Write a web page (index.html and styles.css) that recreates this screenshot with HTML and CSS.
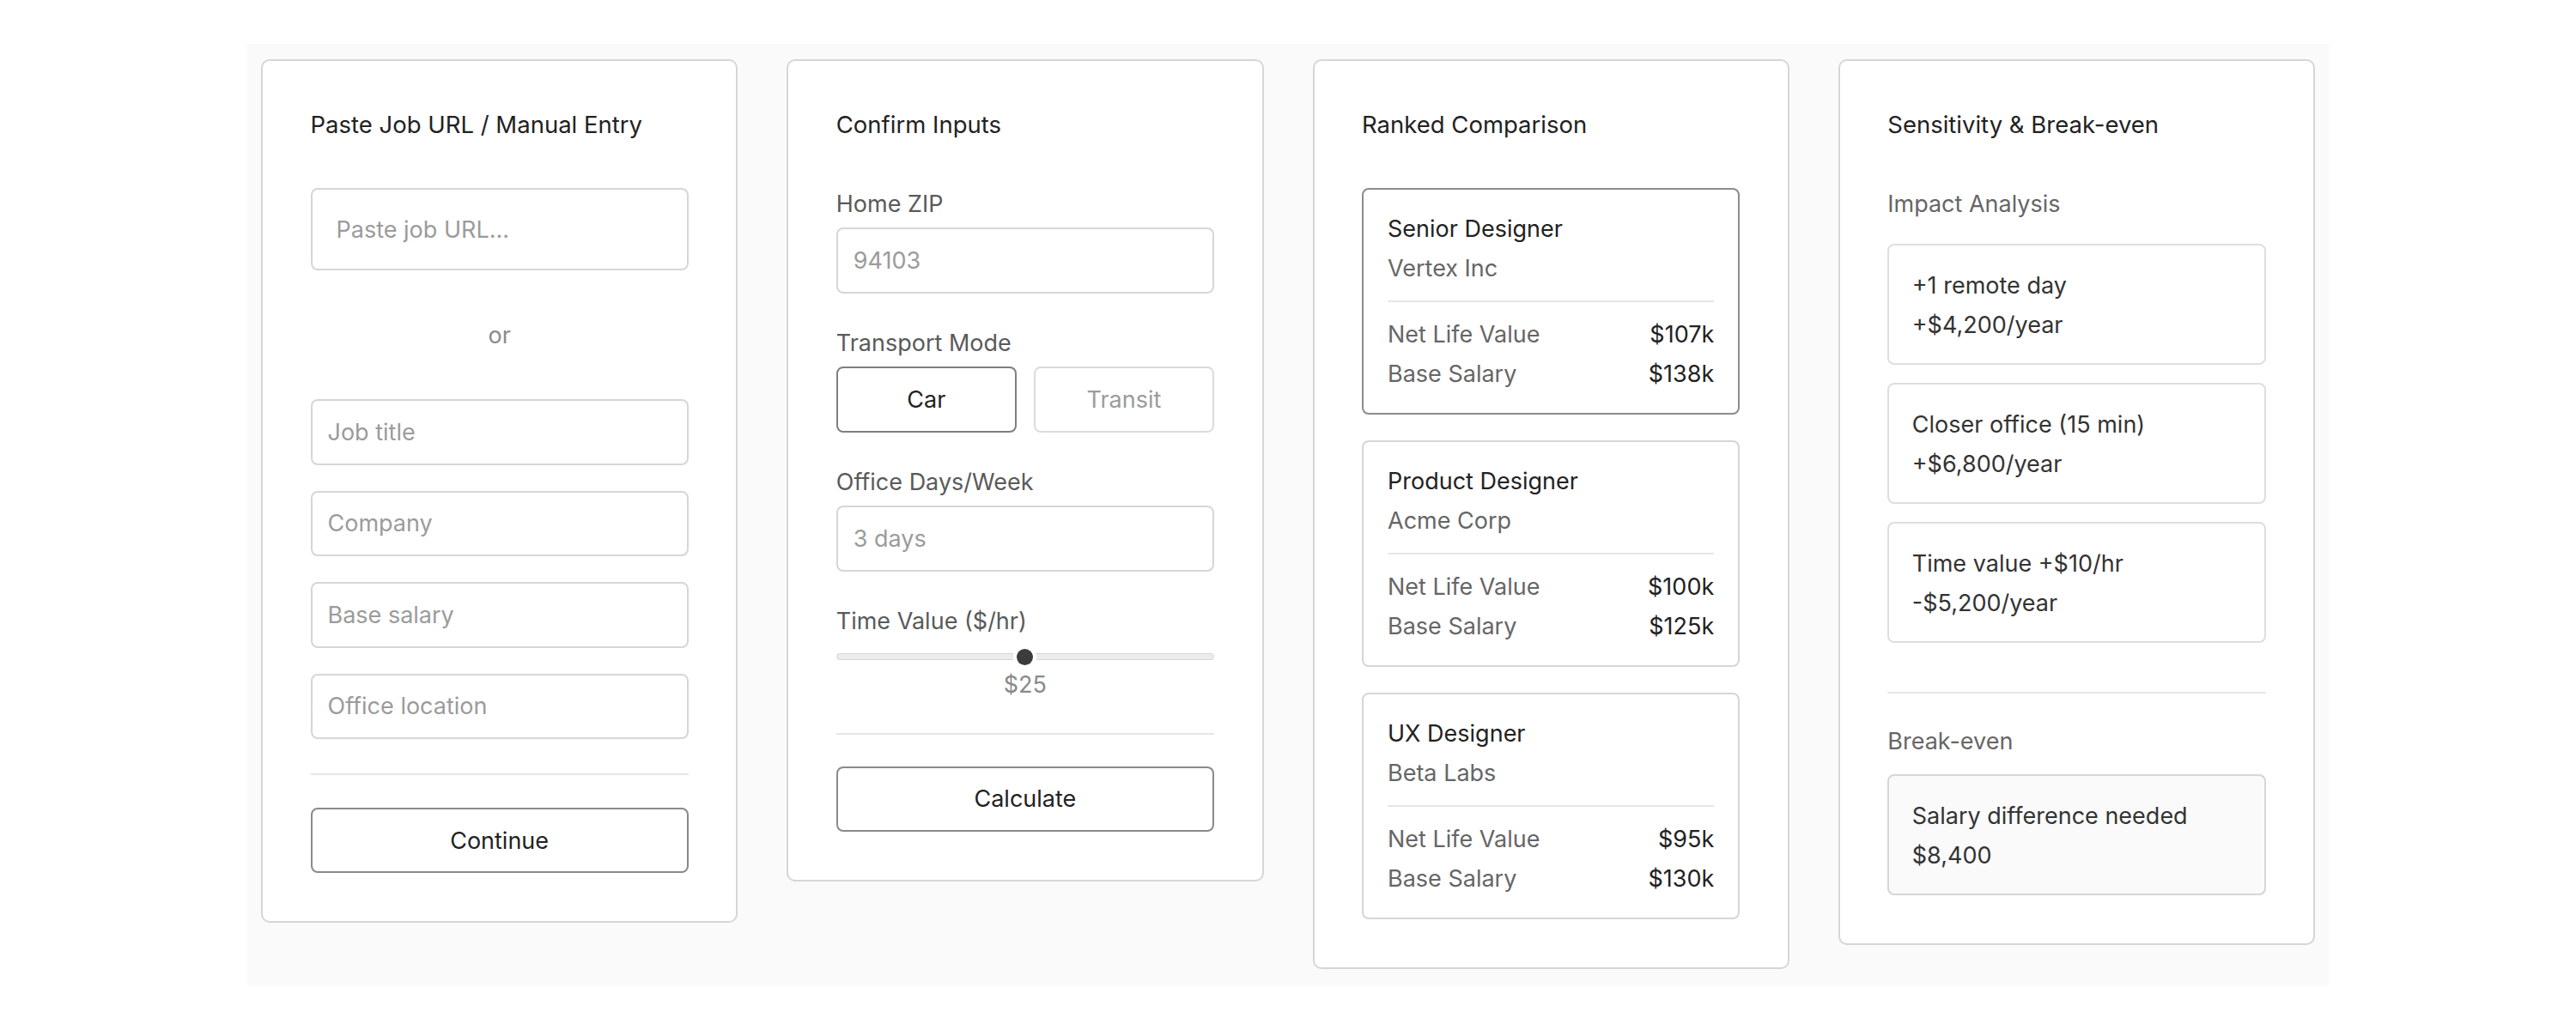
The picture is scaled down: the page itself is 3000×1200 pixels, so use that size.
FILE: index.html
```html
<!DOCTYPE html>
<html lang="en">
<head>
<meta charset="utf-8">
<title>Job Offer Comparison</title>
<link rel="stylesheet" href="styles.css">
</head>
<body>
<main class="board">
  <section class="card">
    <h2 class="card-title">Paste Job URL / Manual Entry</h2>
    <input class="field field-url" type="text" placeholder="Paste job URL...">
    <div class="or">or</div>
    <div class="stack">
      <input class="field field-entry" type="text" placeholder="Job title">
      <input class="field field-entry" type="text" placeholder="Company">
      <input class="field field-entry" type="text" placeholder="Base salary">
      <input class="field field-entry" type="text" placeholder="Office location">
    </div>
    <hr class="divider">
    <button class="btn" type="button">Continue</button>
  </section>

  <section class="card">
    <h2 class="card-title">Confirm Inputs</h2>
    <div class="group">
      <div class="label">Home ZIP</div>
      <input class="field field-tall" type="text" placeholder="94103">
    </div>
    <div class="group">
      <div class="label">Transport Mode</div>
      <div class="seg">
        <button class="seg-btn seg-on" type="button">Car</button>
        <button class="seg-btn seg-off" type="button">Transit</button>
      </div>
    </div>
    <div class="group">
      <div class="label">Office Days/Week</div>
      <input class="field field-tall" type="text" placeholder="3 days">
    </div>
    <div class="group group-last">
      <div class="label">Time Value ($/hr)</div>
      <div class="slider">
        <div class="track"></div>
        <div class="thumb"></div>
      </div>
      <div class="value">$25</div>
    </div>
    <hr class="divider divider-b">
    <button class="btn" type="button">Calculate</button>
  </section>

  <section class="card">
    <h2 class="card-title">Ranked Comparison</h2>
    <div class="jobs">
      <div class="job job-top">
        <div class="job-name">Senior Designer</div>
        <div class="job-co">Vertex Inc</div>
        <div class="job-rule"></div>
        <div class="row"><span class="row-k">Net Life Value</span><span class="row-v">$107k</span></div>
        <div class="row"><span class="row-k">Base Salary</span><span class="row-v">$138k</span></div>
      </div>
      <div class="job">
        <div class="job-name">Product Designer</div>
        <div class="job-co">Acme Corp</div>
        <div class="job-rule"></div>
        <div class="row"><span class="row-k">Net Life Value</span><span class="row-v">$100k</span></div>
        <div class="row"><span class="row-k">Base Salary</span><span class="row-v">$125k</span></div>
      </div>
      <div class="job">
        <div class="job-name">UX Designer</div>
        <div class="job-co">Beta Labs</div>
        <div class="job-rule"></div>
        <div class="row"><span class="row-k">Net Life Value</span><span class="row-v">$95k</span></div>
        <div class="row"><span class="row-k">Base Salary</span><span class="row-v">$130k</span></div>
      </div>
    </div>
  </section>

  <section class="card">
    <h2 class="card-title">Sensitivity &amp; Break-even</h2>
    <div class="section-label">Impact Analysis</div>
    <div class="impacts">
      <div class="impact">
        <div>+1 remote day</div>
        <div>+$4,200/year</div>
      </div>
      <div class="impact">
        <div>Closer office (15 min)</div>
        <div>+$6,800/year</div>
      </div>
      <div class="impact">
        <div>Time value +$10/hr</div>
        <div>-$5,200/year</div>
      </div>
    </div>
    <hr class="divider divider-c">
    <div class="section-label section-label-b">Break-even</div>
    <div class="impact impact-shaded">
      <div>Salary difference needed</div>
      <div>$8,400</div>
    </div>
  </section>
</main>
</body>
</html>
```

FILE: styles.css
```css
* { box-sizing: border-box; }

html, body {
  margin: 0;
  background: #ffffff;
}

body {
  font-family: Inter, "Noto Sans", "Liberation Sans", sans-serif;
  font-size: 27px;
  color: #222222;
}

.board {
  width: 2424px;
  margin: 51px auto 0;
  padding: 18px 16px 20px;
  background: #fafafa;
  display: flex;
  align-items: flex-start;
  gap: 57px;
}

.card {
  flex: 1 1 0;
  min-width: 0;
  background: #ffffff;
  border: 2px solid #d6d6d6;
  border-radius: 10px;
  padding: 57px 55.5px 56px;
  display: flex;
  flex-direction: column;
}

.card-title {
  margin: 0 0 56px;
  font-size: 27.5px;
  font-weight: 400;
  line-height: 35px;
  color: #222222;
}

/* inputs */
.field {
  display: block;
  width: 100%;
  height: 76px;
  margin: 0;
  padding: 0 18px;
  border: 2px solid #d6d6d6;
  border-radius: 8px;
  background: #ffffff;
  font-family: inherit;
  font-size: 27px;
  color: #222222;
  outline: none;
}

.field::placeholder {
  color: #9b9b9b;
  opacity: 1;
}

.field-url {
  height: 96px;
  padding: 0 28px;
}

.field-entry {
  height: 76.5px;
}

.field-tall {
  height: 77px;
}

.or {
  margin: 57px 0 55.5px;
  line-height: 37.5px;
  text-align: center;
  color: #8a8a8a;
}

.stack {
  display: flex;
  flex-direction: column;
  gap: 30px;
}

.divider {
  border: 0;
  height: 2px;
  margin: 40px 0 38px;
  background: #e6e6e6;
}

.divider-b {
  margin: 37px 0 37px;
}

.divider-c {
  margin: 57px 0 37px;
}

.btn {
  display: block;
  width: 100%;
  height: 76px;
  margin: 0;
  border: 2px solid #8a8a8a;
  border-radius: 8px;
  background: #ffffff;
  font-family: inherit;
  font-size: 27px;
  color: #222222;
}

/* confirm inputs */
.group {
  display: flex;
  flex-direction: column;
  margin-bottom: 39px;
}

.group-last {
  margin-bottom: 0;
}

.label {
  line-height: 37.5px;
  color: #5a5a5a;
  margin-bottom: 8.5px;
}

.seg {
  display: flex;
  gap: 20px;
}

.seg-btn {
  flex: 1 1 0;
  height: 77px;
  margin: 0;
  border: 2px solid #dcdcdc;
  border-radius: 8px;
  background: #ffffff;
  font-family: inherit;
  font-size: 27px;
  color: #9b9b9b;
}

.seg-on {
  border-color: #7f7f7f;
  color: #222222;
}

.slider {
  position: relative;
  height: 28px;
}

.track {
  position: absolute;
  left: 0;
  right: 0;
  top: 10px;
  height: 8px;
  background: #ececec;
  border: 1px solid #d6d6d6;
  border-radius: 5px;
}

.thumb {
  position: absolute;
  left: 50%;
  top: 4.5px;
  width: 19px;
  height: 19px;
  margin-left: -9.5px;
  border-radius: 50%;
  background: #3c3c3c;
  box-shadow: 0 0 0 4px #ffffff;
}

.value {
  line-height: 37.5px;
  text-align: center;
  color: #8a8a8a;
}

/* ranked comparison */
.jobs {
  display: flex;
  flex-direction: column;
  gap: 30px;
}

.job {
  border: 2px solid #d6d6d6;
  border-radius: 8px;
  padding: 23px 28px 22px;
}

.job-top {
  border-color: #8c8c8c;
}

.job-name {
  line-height: 46px;
  color: #222222;
}

.job-co {
  line-height: 46px;
  color: #666666;
}

.job-rule {
  height: 2px;
  margin: 14px 0 15px;
  background: #e6e6e6;
}

.row {
  display: flex;
  justify-content: space-between;
  line-height: 46px;
}

.row-k {
  color: #666666;
}

.row-v {
  color: #222222;
}

/* sensitivity */
.section-label {
  line-height: 37.5px;
  color: #666666;
  margin-bottom: 27.5px;
}

.section-label-b {
  margin-bottom: 19.5px;
}

.impacts {
  display: flex;
  flex-direction: column;
  gap: 21px;
}

.impact {
  border: 2px solid #dedede;
  border-radius: 8px;
  padding: 24px 26.5px 21px;
  line-height: 46px;
  color: #333333;
}

.impact-shaded {
  background: #fafafa;
  border-color: #d6d6d6;
}
```
